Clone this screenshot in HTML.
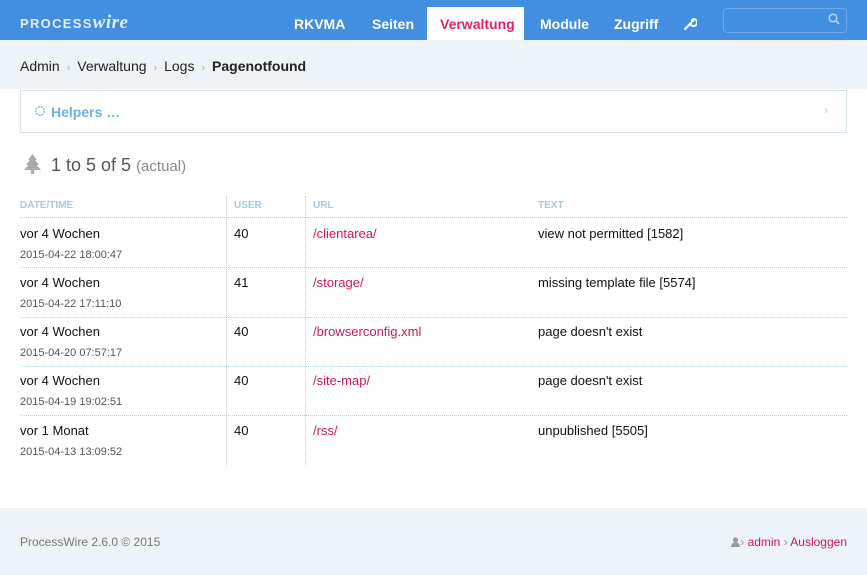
<!DOCTYPE html><html><head><style>
body{margin:0;width:867px;height:575px;position:relative;font-family:"Liberation Sans",sans-serif;background:#fff;overflow:hidden}
.a{position:absolute;white-space:nowrap}
.hd{position:absolute;left:0;top:0;width:867px;height:40px;background:#428fe2}
.nav{color:#fff;font-weight:bold;font-size:14px;top:16px}
.bc{position:absolute;left:0;top:40px;width:867px;height:49px;background:#eef3f8}
.t{font-size:13px;color:#111}
.d{font-size:11px;color:#555}
.u{font-size:13px;color:#d1175a}
.th{font-size:10px;font-weight:bold;color:#a9c8da;top:200px}
.hl{position:absolute;left:20px;width:827px;border-top:1px dotted #b9cfdc}
.vl{position:absolute;top:196px;height:270px;border-left:1px dotted #b9cfdc}
</style></head><body>
<div class="hd"></div>
<div class="a" style="left:20px;top:12px;color:#e3eefb;font-size:13px;font-weight:bold;letter-spacing:1.3px">PROCESS<span style="font-family:'Liberation Serif',serif;font-style:italic;font-size:19px;letter-spacing:0.5px">wire</span></div>
<div class="a nav" style="left:294px">RKVMA</div>
<div class="a nav" style="left:372px">Seiten</div>
<div class="a" style="left:427px;top:7px;width:97px;height:33px;background:#fff"></div>
<div class="a nav" style="left:440px;color:#e5215f">Verwaltung</div>
<div class="a nav" style="left:540px">Module</div>
<div class="a nav" style="left:614px">Zugriff</div>
<svg class="a" style="left:684px;top:17px" width="13" height="13"><path d="M1 12 L7 6" stroke="#fff" stroke-width="2.2" stroke-linecap="round"/><path d="M6 6 A3.5 3.5 0 1 0 10 2 L9 4 L8 4 L8 3 L10 1.5" stroke="#fff" stroke-width="2" fill="none"/></svg>
<div class="a" style="left:723px;top:8px;width:122px;height:23px;border:1px solid #6ea9ea;border-radius:4px"></div>
<svg class="a" style="left:828px;top:13px" width="12" height="12"><circle cx="5" cy="5" r="3.8" stroke="#b7d3f3" stroke-width="1.5" fill="none"/><line x1="8" y1="8" x2="11" y2="11" stroke="#b7d3f3" stroke-width="1.6"/></svg>
<div class="bc"></div>
<div class="a" style="left:20px;top:58px;font-size:14px;color:#222">Admin <span style="color:#aaa;font-size:11px">&nbsp;›&nbsp;</span> Verwaltung <span style="color:#aaa;font-size:11px">&nbsp;›&nbsp;</span> Logs <span style="color:#aaa;font-size:11px">&nbsp;›&nbsp;</span> <b>Pagenotfound</b></div>
<div class="a" style="left:20px;top:90px;width:825px;height:41px;border:1px solid #d6e2ec;background:#fff"></div>
<svg class="a" style="left:34px;top:105px" width="12" height="12"><circle cx="6" cy="6" r="4.3" stroke="#71aee8" stroke-width="1.3" fill="none" stroke-dasharray="2 1"/></svg>
<div class="a" style="left:51px;top:104px;font-size:14px;font-weight:bold;color:#71aee8">Helpers …</div>
<div class="a" style="left:824px;top:103px;color:#ccc;font-size:12px">›</div>
<svg class="a" style="left:24px;top:154px" width="17" height="20"><path d="M8.5 0 L13 6 L11 6 L15 11 L12.5 11 L17 16 L10 16 L10 20 L7 20 L7 16 L0 16 L4.5 11 L2 11 L6 6 L4 6 Z" fill="#aaa"/></svg>
<div class="a" style="left:51px;top:155px;font-size:18px;color:#555">1 to 5 of 5 <span style="font-size:15px;color:#888">(actual)</span></div>
<div class="a th" style="left:20px">DATE/TIME</div><div class="a th" style="left:234px">USER</div><div class="a th" style="left:313px">URL</div><div class="a th" style="left:538px">TEXT</div>
<div class="vl" style="left:226px"></div><div class="vl" style="left:305px"></div>
<div class="hl" style="top:217px"></div><div class="hl" style="top:267px"></div><div class="hl" style="top:317px"></div><div class="hl" style="top:366px"></div><div class="hl" style="top:415px"></div>

<div class="a t" style="left:20px;top:226px">vor 4 Wochen</div><div class="a d" style="left:20px;top:249px">2015-04-22 18:00:47</div><div class="a t" style="left:234px;top:226px">40</div><div class="a u" style="left:313px;top:226px">/clientarea/</div><div class="a t" style="left:538px;top:226px">view not permitted [1582]</div>
<div class="a t" style="left:20px;top:275px">vor 4 Wochen</div><div class="a d" style="left:20px;top:298px">2015-04-22 17:11:10</div><div class="a t" style="left:234px;top:275px">41</div><div class="a u" style="left:313px;top:275px">/storage/</div><div class="a t" style="left:538px;top:275px">missing template file [5574]</div>
<div class="a t" style="left:20px;top:324px">vor 4 Wochen</div><div class="a d" style="left:20px;top:347px">2015-04-20 07:57:17</div><div class="a t" style="left:234px;top:324px">40</div><div class="a u" style="left:313px;top:324px">/browserconfig.xml</div><div class="a t" style="left:538px;top:324px">page doesn't exist</div>
<div class="a t" style="left:20px;top:373px">vor 4 Wochen</div><div class="a d" style="left:20px;top:396px">2015-04-19 19:02:51</div><div class="a t" style="left:234px;top:373px">40</div><div class="a u" style="left:313px;top:373px">/site-map/</div><div class="a t" style="left:538px;top:373px">page doesn't exist</div>
<div class="a t" style="left:20px;top:423px">vor 1 Monat</div><div class="a d" style="left:20px;top:446px">2015-04-13 13:09:52</div><div class="a t" style="left:234px;top:423px">40</div><div class="a u" style="left:313px;top:423px">/rss/</div><div class="a t" style="left:538px;top:423px">unpublished [5505]</div>

<div class="a" style="left:0;top:508px;width:867px;height:67px;background:#eef3f8"></div>
<div class="a" style="left:20px;top:535px;font-size:12px;color:#777">ProcessWire 2.6.0 © 2015</div>
<div class="a" style="right:20px;top:535px;font-size:12px;color:#d1175a"><svg width="9" height="10" style="vertical-align:-1px"><circle cx="4.5" cy="3" r="2.6" fill="#999"/><path d="M0 10 Q0 5.5 4.5 5.5 Q9 5.5 9 10Z" fill="#999"/></svg><span style="color:#999">›</span> admin <span style="color:#999">›</span> Ausloggen</div>
</body></html>
